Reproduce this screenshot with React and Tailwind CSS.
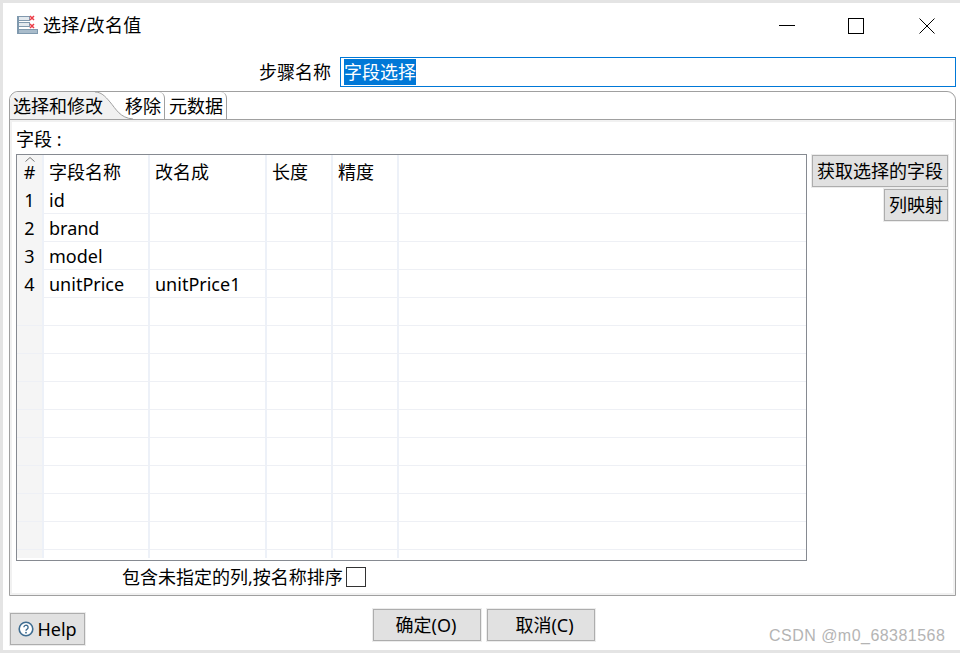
const rows = [
  { no: '1', name: 'id', rename: '' },
  { no: '2', name: 'brand', rename: '' },
  { no: '3', name: 'model', rename: '' },
  { no: '4', name: 'unitPrice', rename: 'unitPrice1' },
  ...Array.from({ length: 9 }, () => ({ no: '', name: '', rename: '' })),
]

const cols = 'grid grid-cols-[25px_106px_117px_66px_66px_1fr]'
const colLine = 'border-l-2 border-[#edf1f8]'

function DialogIcon() {
  return (
    <svg width="21" height="20" viewBox="0 0 21 20" className="shrink-0">
      <rect x="0.5" y="1.5" width="12" height="4" fill="#e3e9ee" stroke="#8199ae" />
      <rect x="0.5" y="7.5" width="12" height="4" fill="#e3e9ee" stroke="#8199ae" />
      <rect x="0.5" y="14.5" width="20" height="4" fill="#a9bccb" stroke="#7f99ae" />
      <rect x="0" y="1" width="2" height="18" fill="#7f99ae" />
      <path d="M13 1l4 4M17 1l-4 4M13 9l4 4M17 9l-4 4" stroke="#ec3b46" strokeWidth="1.5" />
    </svg>
  )
}

function HelpIcon() {
  return (
    <svg width="16" height="16" viewBox="0 0 16 16" className="shrink-0">
      <circle cx="8" cy="8" r="6.8" fill="#fff" stroke="#3f6d91" strokeWidth="1.6" />
      <path d="M5.9 6.3a2.1 2.1 0 1 1 3.2 1.8c-.7.4-1.1.8-1.1 1.6" fill="none" stroke="#3f6d91" strokeWidth="1.4" />
      <circle cx="8" cy="11.7" r="0.9" fill="#3f6d91" />
    </svg>
  )
}

function Btn({ className, children }) {
  return (
    <button className={`flex items-center justify-center bg-[#e1e1e1] border border-[#adadad] outline outline-[#ececec] ${className}`}>
      {children}
    </button>
  )
}

export default function App() {
  return (
    <div className="relative w-[960px] h-[653px] overflow-hidden bg-[#e4e4e4] pt-[3px] pl-[3px] pb-[3px] text-[18px] leading-[26px] text-black font-['Noto_Sans','Noto_Sans_CJK_SC',sans-serif]">
      <div className="h-full bg-white flex flex-col">
        {/* Title bar */}
        <div className="h-[54px] flex items-start justify-between shrink-0">
          <div className="flex items-center gap-[5px] pl-[14px] pt-[9px]">
            <DialogIcon />
            <span className="tracking-[0.3px]">选择/改名值</span>
          </div>
          <div className="flex items-center pt-[15px] pr-[25px]">
            <svg width="16" height="16" viewBox="0 0 16 16">
              <path d="M0 7.5h16" stroke="#000" />
            </svg>
            <svg width="16" height="16" viewBox="0 0 16 16" className="ml-[53px]">
              <rect x="0.5" y="0.5" width="15" height="15" fill="none" stroke="#000" />
            </svg>
            <svg width="16" height="16" viewBox="0 0 16 16" className="ml-[55px]">
              <path d="M0.5 0.5l15 15M15.5 0.5l-15 15" stroke="#000" />
            </svg>
          </div>
        </div>

        {/* Step name */}
        <div className="h-[30px] flex items-center pr-[4px] shrink-0">
          <label className="w-[328px] text-right shrink-0">步骤名称</label>
          <div className="ml-[9px] flex-1 h-[30px] border border-[#0078d7] flex items-center pl-[3px]">
            <span className="bg-[#0078d7] text-white">字段选择</span>
          </div>
        </div>

        {/* Tab folder */}
        <div className="ml-[6px] mr-[4px] mt-[4px] h-[505px] shrink-0 flex flex-col border border-[#a0a0a0] rounded-t-[9px] bg-[#f1f1f1]">
          <div className="h-[28px] flex items-stretch border-b border-[#a0a0a0] bg-white rounded-t-[9px] shrink-0 leading-[29px]">
            <div className="relative w-[85px] pl-[3px] bg-[#f1f1f1] rounded-tl-[9px]">
              <span className="relative z-10 whitespace-nowrap">选择和修改</span>
            </div>
            <svg width="38" height="28" viewBox="0 0 38 28" className="shrink-0">
              <path d="M0 0C6 0 10 4 15 10 21 17 25 26 38 27L0 27Z" fill="#f1f1f1" />
              <path d="M0 0C6 0 10 4 15 10 21 17 25 26 38 27" fill="none" stroke="#a0a0a0" />
            </svg>
            <div className="relative -ml-[8px] w-[40px] whitespace-nowrap border-r border-[#a0a0a0] rounded-tr-[6px]">移除</div>
            <div className="w-[62px] pl-[4px] whitespace-nowrap border-r border-[#a0a0a0] rounded-tr-[6px]">元数据</div>
          </div>

          <div className="flex-1 mx-[2px] mb-[2px] mt-[2px] bg-white flex flex-col min-h-0">
            <div className="pl-[4px] h-[32px] pt-[4px] shrink-0">字段 :</div>
            <div className="flex flex-1 min-h-0 items-start">
              {/* Fields table */}
              <div className="ml-[4px] w-[791px] h-[407px] border border-[#868a91] overflow-hidden shrink-0">
                <div className={`${cols} h-[31px]`}>
                  <div className="relative bg-[#f5f5f5] text-center pt-[4px]">
                    <svg width="10" height="5" viewBox="0 0 10 5" className="absolute left-[8px] top-[2px]">
                      <path d="M0.5 4.5L5 0.5l4.5 4" fill="none" stroke="#777" />
                    </svg>
                    #
                  </div>
                  <div className={`pl-[5px] pt-[4px] ${colLine}`}>字段名称</div>
                  <div className={`pl-[5px] pt-[4px] ${colLine}`}>改名成</div>
                  <div className={`pl-[5px] pt-[4px] ${colLine}`}>长度</div>
                  <div className={`pl-[5px] pt-[4px] ${colLine}`}>精度</div>
                  <div className={colLine} />
                </div>
                {rows.map((row, i) => (
                  <div key={i} className={`${cols} h-[28px] border-b border-[#eef0f5] leading-[29px]`}>
                    <div className="bg-[#f5f5f5] text-center">{row.no}</div>
                    <div className={`pl-[5px] ${colLine}`}>{row.name}</div>
                    <div className={`pl-[5px] ${colLine}`}>{row.rename}</div>
                    <div className={colLine} />
                    <div className={colLine} />
                    <div className={colLine} />
                  </div>
                ))}
                <div className={`${cols} h-[8px]`}>
                  <div className="bg-[#f5f5f5]" />
                  <div className={colLine} />
                  <div className={colLine} />
                  <div className={colLine} />
                  <div className={colLine} />
                  <div className={colLine} />
                </div>
              </div>

              <div className="ml-[5px] w-[136px] pt-[1px] flex flex-col items-end gap-[2px]">
                <Btn className="w-[136px] h-[32px] whitespace-nowrap">获取选择的字段</Btn>
                <Btn className="w-[64px] h-[32px] whitespace-nowrap">列映射</Btn>
              </div>
            </div>

            <div className="h-[32px] flex items-center pl-[110px] gap-[3px] shrink-0">
              <span className="whitespace-nowrap">包含未指定的列,按名称排序</span>
              <span className="w-[20px] h-[20px] border border-[#333] bg-white" />
            </div>
          </div>
        </div>

        {/* Bottom buttons */}
        <div className="flex-1 flex items-start">
          <Btn className="mt-[17px] ml-[7px] w-[75px] h-[32px] gap-[3px]">
            <HelpIcon />
            <span>Help</span>
          </Btn>
          <Btn className="mt-[13px] ml-[288px] w-[108px] h-[32px] pr-[2px]">确定(O)</Btn>
          <Btn className="mt-[13px] ml-[6px] w-[108px] h-[32px] pl-[7px]">取消(C)</Btn>
        </div>
      </div>

      {/* CSDN watermark */}
      <span className="absolute left-[769px] top-[623px] text-[16px] text-[#b4b4b4] font-['Liberation_Sans',sans-serif] tracking-[0.47px]">CSDN @m0_68381568</span>
    </div>
  )
}
